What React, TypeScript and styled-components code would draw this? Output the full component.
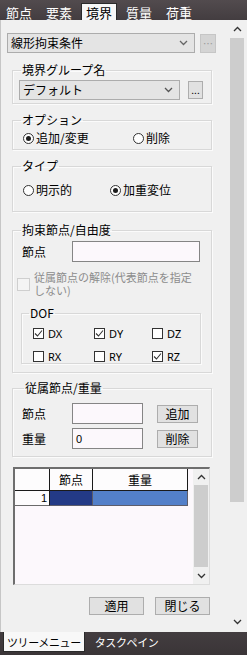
import React from 'react';
import styled, { createGlobalStyle } from 'styled-components';

const GlobalStyle = createGlobalStyle`
  body {
    margin: 0;
    background: #f0f0f0;
  }
  * {
    box-sizing: border-box;
  }
`;

const FONT = `"Noto Sans CJK JP", "Noto Sans", sans-serif`;

const Chevron = ({ up = false, color = '#333' }: { up?: boolean; color?: string }) => (
  <svg width="9" height="6" viewBox="0 0 9 6">
    <path
      d={up ? 'M1 5 L4.5 1.5 L8 5' : 'M1 1 L4.5 4.5 L8 1'}
      fill="none"
      stroke={color}
      strokeWidth="1.3"
    />
  </svg>
);

const Check = () => (
  <svg width="9" height="9" viewBox="0 0 9 9">
    <path d="M1 4.5 L3.5 7 L8 1.5" fill="none" stroke="#333" strokeWidth="1.1" />
  </svg>
);

const DOF: [string, boolean][] = [
  ['DX', true],
  ['DY', true],
  ['DZ', false],
  ['RX', false],
  ['RY', false],
  ['RZ', true],
];

const App = () => {
  return (
    <>
      <GlobalStyle />
      <Root>
        <TopBar>
          <Tab>節点</Tab>
          <Tab>要素</Tab>
          <Tab $active>境界</Tab>
          <Tab>質量</Tab>
          <Tab>荷重</Tab>
        </TopBar>

        <Middle>
          <Content>
            <Row>
              <Combo $w={188}>
                <ComboText>線形拘束条件</ComboText>
                <Chevron color="#666" />
              </Combo>
              <DotButton $disabled $ml={5}>…</DotButton>
            </Row>

            <Group $mt={10} $pt={3} $pb={3} $pl={6}>
              <Legend $ml={2}>境界グループ名</Legend>
              <Row>
                <Combo $w={161}>
                  <ComboText>デフォルト</ComboText>
                  <Chevron color="#555" />
                </Combo>
                <DotButton $ml={8}>...</DotButton>
              </Row>
            </Group>

            <Group $mt={9} $pt={4} $pb={4} $pl={10}>
              <Legend $ml={-2}>オプション</Legend>
              <Row>
                <Radio $w={110}>
                  <RadioDot $checked />
                  追加/変更
                </Radio>
                <Radio>
                  <RadioDot />
                  削除
                </Radio>
              </Row>
            </Group>

            <Group $mt={9} $pt={10} $pb={14} $pl={10}>
              <Legend $ml={-2}>タイプ</Legend>
              <Row>
                <Radio $w={87}>
                  <RadioDot />
                  明示的
                </Radio>
                <Radio>
                  <RadioDot $checked />
                  加重変位
                </Radio>
              </Row>
            </Group>

            <Group $mt={11} $pt={4} $pb={8} $pl={9}>
              <Legend $ml={-1}>拘束節点/自由度</Legend>
              <Row>
                <FieldLabel>節点</FieldLabel>
                <TextInput $w={128} />
              </Row>
              <DisabledCheck>
                <CheckBox $disabled />
                <DisabledText>従属節点の解除(代表節点を指定しない)</DisabledText>
              </DisabledCheck>
              <DofGroup>
                <Legend $ml={-4}>DOF</Legend>
                <DofGrid>
                  {DOF.map(([name, on]) => (
                    <CheckItem key={name}>
                      <CheckBox>{on ? <Check /> : null}</CheckBox>
                      {name}
                    </CheckItem>
                  ))}
                </DofGrid>
              </DofGroup>
            </Group>

            <Group $mt={8} $pt={8} $pb={7} $pl={9}>
              <Legend $ml={2}>従属節点/重量</Legend>
              <Row>
                <FieldLabel>節点</FieldLabel>
                <TextInput $w={71} />
                <Button $w={41} $ml={14}>追加</Button>
              </Row>
              <Row $mt={4}>
                <FieldLabel>重量</FieldLabel>
                <TextInput $w={71}>0</TextInput>
                <Button $w={41} $ml={14}>削除</Button>
              </Row>
            </Group>

            <GridFrame>
              <GridBody>
                <GridRow>
                  <HeadCell />
                  <HeadCell>節点</HeadCell>
                  <HeadCell>重量</HeadCell>
                </GridRow>
                <GridRow $row>
                  <RowHead>1</RowHead>
                  <DataCell $bg="#233a86" />
                  <DataCell $bg="#5380c9" />
                </GridRow>
              </GridBody>
              <InnerScroll>
                <ScrollArrow $h={16}>
                  <Chevron up />
                </ScrollArrow>
                <ScrollThumb />
                <ScrollArrow $h={17}>
                  <Chevron />
                </ScrollArrow>
              </InnerScroll>
            </GridFrame>

            <ButtonRow>
              <Button $w={55} $h={18}>適用</Button>
              <Button $w={55} $h={18}>閉じる</Button>
            </ButtonRow>
          </Content>

          <OuterScroll>
            <ScrollArrow $h={18}>
              <Chevron up />
            </ScrollArrow>
            <OuterThumb />
            <ScrollTrack />
            <ScrollArrow $h={20}>
              <Chevron />
            </ScrollArrow>
          </OuterScroll>
        </Middle>

        <BottomBar>
          <BottomTab $active>ツリーメニュー</BottomTab>
          <BottomTab>タスクペイン</BottomTab>
        </BottomBar>
      </Root>
    </>
  );
};

export default App;

const Root = styled.div`
  width: 247px;
  height: 655px;
  display: flex;
  flex-direction: column;
  overflow: hidden;
  background: #f0f0f0;
  font-family: ${FONT};
  font-size: 12px;
  line-height: 14px;
  color: #000;
`;

const TopBar = styled.div`
  height: 20px;
  flex: none;
  display: flex;
  align-items: flex-end;
  gap: 4px;
  padding-left: 1px;
  background: linear-gradient(#524b4e, #433d40);
`;

const Tab = styled.div<{ $active?: boolean }>`
  width: 36px;
  height: 17px;
  display: flex;
  align-items: center;
  justify-content: center;
  font-size: 13px;
  line-height: 17px;
  color: ${(p) => (p.$active ? '#000' : '#fff')};
  background: ${(p) => (p.$active ? '#f7f7f7' : 'transparent')};
  border: 1px solid ${(p) => (p.$active ? '#2a2a2a' : 'transparent')};
  border-bottom: none;
`;

const Middle = styled.div`
  flex: 1;
  display: flex;
  min-height: 0;
`;

const Content = styled.div`
  width: 228px;
  flex: none;
  display: flex;
  flex-direction: column;
  padding: 13px 12px 0 7px;
  box-shadow: inset 1px 0 0 #c6c6c6;
`;

const Row = styled.div<{ $mt?: number }>`
  display: flex;
  align-items: center;
  margin-top: ${(p) => p.$mt ?? 0}px;
`;

const Combo = styled.div<{ $w: number }>`
  width: ${(p) => p.$w}px;
  height: 20px;
  display: flex;
  align-items: center;
  justify-content: space-between;
  padding: 0 6px 0 3px;
  background: #e4e4e4;
  border: 1px solid #acacac;
`;

const ComboText = styled.span`
  font-size: 12px;
`;

const DotButton = styled.div<{ $disabled?: boolean; $ml: number }>`
  width: ${(p) => (p.$disabled ? 16 : 15)}px;
  height: ${(p) => (p.$disabled ? 19 : 18)}px;
  margin-left: ${(p) => p.$ml}px;
  display: flex;
  align-items: flex-end;
  justify-content: center;
  padding-bottom: 3px;
  font-size: 10px;
  line-height: 10px;
  color: ${(p) => (p.$disabled ? '#9a9a9a' : '#000')};
  background: ${(p) => (p.$disabled ? '#d4d4d4' : '#e1e1e1')};
  border: 1px solid ${(p) => (p.$disabled ? '#c6c6c6' : '#adadad')};
`;

const Group = styled.fieldset<{ $mt: number; $pt: number; $pb: number; $pl: number }>`
  margin: ${(p) => p.$mt}px 4px 0 5px;
  padding: ${(p) => p.$pt}px 8px ${(p) => p.$pb}px ${(p) => p.$pl}px;
  border: 1px solid #d8d8d8;
  box-shadow: inset 1px 1px 0 #fbfbfb, 1px 1px 0 #fbfbfb;
  min-width: 0;
`;

const Legend = styled.legend<{ $ml: number }>`
  margin-left: ${(p) => p.$ml}px;
  padding: 0 1px;
  font-size: 12px;
  line-height: 14px;
`;

const Radio = styled.label<{ $w?: number }>`
  width: ${(p) => (p.$w ? `${p.$w}px` : 'auto')};
  display: flex;
  align-items: center;
  gap: 2px;
  height: 14px;
  font-size: 12px;
`;

const RadioDot = styled.span<{ $checked?: boolean }>`
  width: 11px;
  height: 11px;
  flex: none;
  border-radius: 50%;
  border: 1px solid #333;
  background: #fff;
  display: flex;
  align-items: center;
  justify-content: center;

  &::after {
    content: '';
    width: 5px;
    height: 5px;
    border-radius: 50%;
    background: ${(p) => (p.$checked ? '#1e1e1e' : 'transparent')};
  }
`;

const FieldLabel = styled.span`
  width: 50px;
  flex: none;
  font-size: 12px;
`;

const TextInput = styled.div<{ $w: number }>`
  width: ${(p) => p.$w}px;
  height: 21px;
  display: flex;
  align-items: center;
  padding-left: 3px;
  background: #fcf8fc;
  border: 1px solid #858585;
  font-family: "Liberation Sans", sans-serif;
  font-size: 11px;
`;

const Button = styled.div<{ $w: number; $h?: number; $ml?: number }>`
  width: ${(p) => p.$w}px;
  height: ${(p) => p.$h ?? 18}px;
  margin-left: ${(p) => p.$ml ?? 0}px;
  display: flex;
  align-items: center;
  justify-content: center;
  background: #e1e1e1;
  border: 1px solid #adadad;
  font-size: 12px;
`;

const DisabledCheck = styled.div`
  display: flex;
  align-items: center;
  gap: 4px;
  margin: 9px 0 0 -5px;
`;

const DisabledText = styled.span`
  width: 168px;
  color: #8c8c8c;
  font-size: 11px;
  line-height: 13px;
`;

const CheckBox = styled.span<{ $disabled?: boolean }>`
  width: ${(p) => (p.$disabled ? 13 : 11)}px;
  height: ${(p) => (p.$disabled ? 13 : 11)}px;
  flex: none;
  display: flex;
  align-items: center;
  justify-content: center;
  background: ${(p) => (p.$disabled ? '#f4f4f4' : '#fff')};
  border: 1px solid ${(p) => (p.$disabled ? '#cfcfcf' : '#333')};
`;

const DofGroup = styled.fieldset`
  width: 180px;
  margin: 9px 0 0 -1px;
  padding: 7px 4px 0 11px;
  border: 1px solid #d8d8d8;
  box-shadow: inset 1px 1px 0 #fbfbfb, 1px 1px 0 #fbfbfb;
  min-width: 0;
`;

const DofGrid = styled.div`
  display: grid;
  grid-template-columns: 61px 58px 1fr;
  row-gap: 10px;
`;

const CheckItem = styled.label`
  display: flex;
  align-items: center;
  gap: 4px;
  height: 13px;
  font-family: "Noto Sans", sans-serif;
  font-size: 11px;
`;

const GridFrame = styled.div`
  width: 197px;
  height: 118px;
  flex: none;
  margin: 10px 0 0 6px;
  display: flex;
  border-top: 2px solid #6e6e6e;
  border-left: 2px solid #6e6e6e;
  border-right: 1px solid #dcdcdc;
  border-bottom: 1px solid #dcdcdc;
  background: #fcf8fc;
`;

const GridBody = styled.div`
  flex: 1;
  display: flex;
  flex-direction: column;
`;

const GridRow = styled.div<{ $row?: boolean }>`
  display: grid;
  grid-template-columns: 35px 43px 95px;
  height: ${(p) => (p.$row ? 14 : 22)}px;
`;

const HeadCell = styled.div`
  display: flex;
  align-items: center;
  justify-content: center;
  background: #fdfcfd;
  border-right: 1px solid #1a1a1a;
  border-bottom: 1px solid #1a1a1a;
  font-size: 12px;
`;

const RowHead = styled.div`
  display: flex;
  align-items: center;
  justify-content: flex-end;
  padding-right: 2px;
  background: #fdfcfd;
  border-right: 1px solid #1a1a1a;
  border-bottom: 1px solid #6a6a6a;
  font-family: "Liberation Sans", sans-serif;
  font-size: 11px;
`;

const DataCell = styled.div<{ $bg: string }>`
  background: ${(p) => p.$bg};
  border-right: 1px solid #5d5d6a;
  border-bottom: 1px solid #5d5d6a;
`;

const InnerScroll = styled.div`
  width: 16px;
  flex: none;
  display: flex;
  flex-direction: column;
  background: #f0f0f0;
`;

const ScrollArrow = styled.div<{ $h: number }>`
  height: ${(p) => p.$h}px;
  flex: none;
  display: flex;
  align-items: center;
  justify-content: center;
`;

const ScrollThumb = styled.div`
  flex: 1;
  margin: 0 1px;
  background: #cdcdcd;
`;

const ButtonRow = styled.div`
  display: flex;
  justify-content: flex-end;
  gap: 11px;
  margin: 12px 6px 0 0;
`;

const OuterScroll = styled.div`
  width: 19px;
  flex: none;
  display: flex;
  flex-direction: column;
  background: #f0f0f0;
`;

const OuterThumb = styled.div`
  height: 464px;
  flex: none;
  margin: 0 3px 0 2px;
  background: #cdcdcd;
`;

const ScrollTrack = styled.div`
  flex: 1;
`;

const BottomBar = styled.div`
  height: 23px;
  flex: none;
  display: flex;
  align-items: flex-start;
  gap: 9px;
  padding-left: 3px;
  background: linear-gradient(#433d40, #3a3537);
`;

const BottomTab = styled.div<{ $active?: boolean }>`
  height: 20px;
  display: flex;
  align-items: center;
  padding: 0 ${(p) => (p.$active ? 3 : 0)}px;
  font-size: 11px;
  letter-spacing: -0.4px;
  color: ${(p) => (p.$active ? '#000' : '#fff')};
  background: ${(p) => (p.$active ? '#f8f8f8' : 'transparent')};
  border: 1px solid ${(p) => (p.$active ? '#2a2a2a' : 'transparent')};
  border-top: none;
`;
